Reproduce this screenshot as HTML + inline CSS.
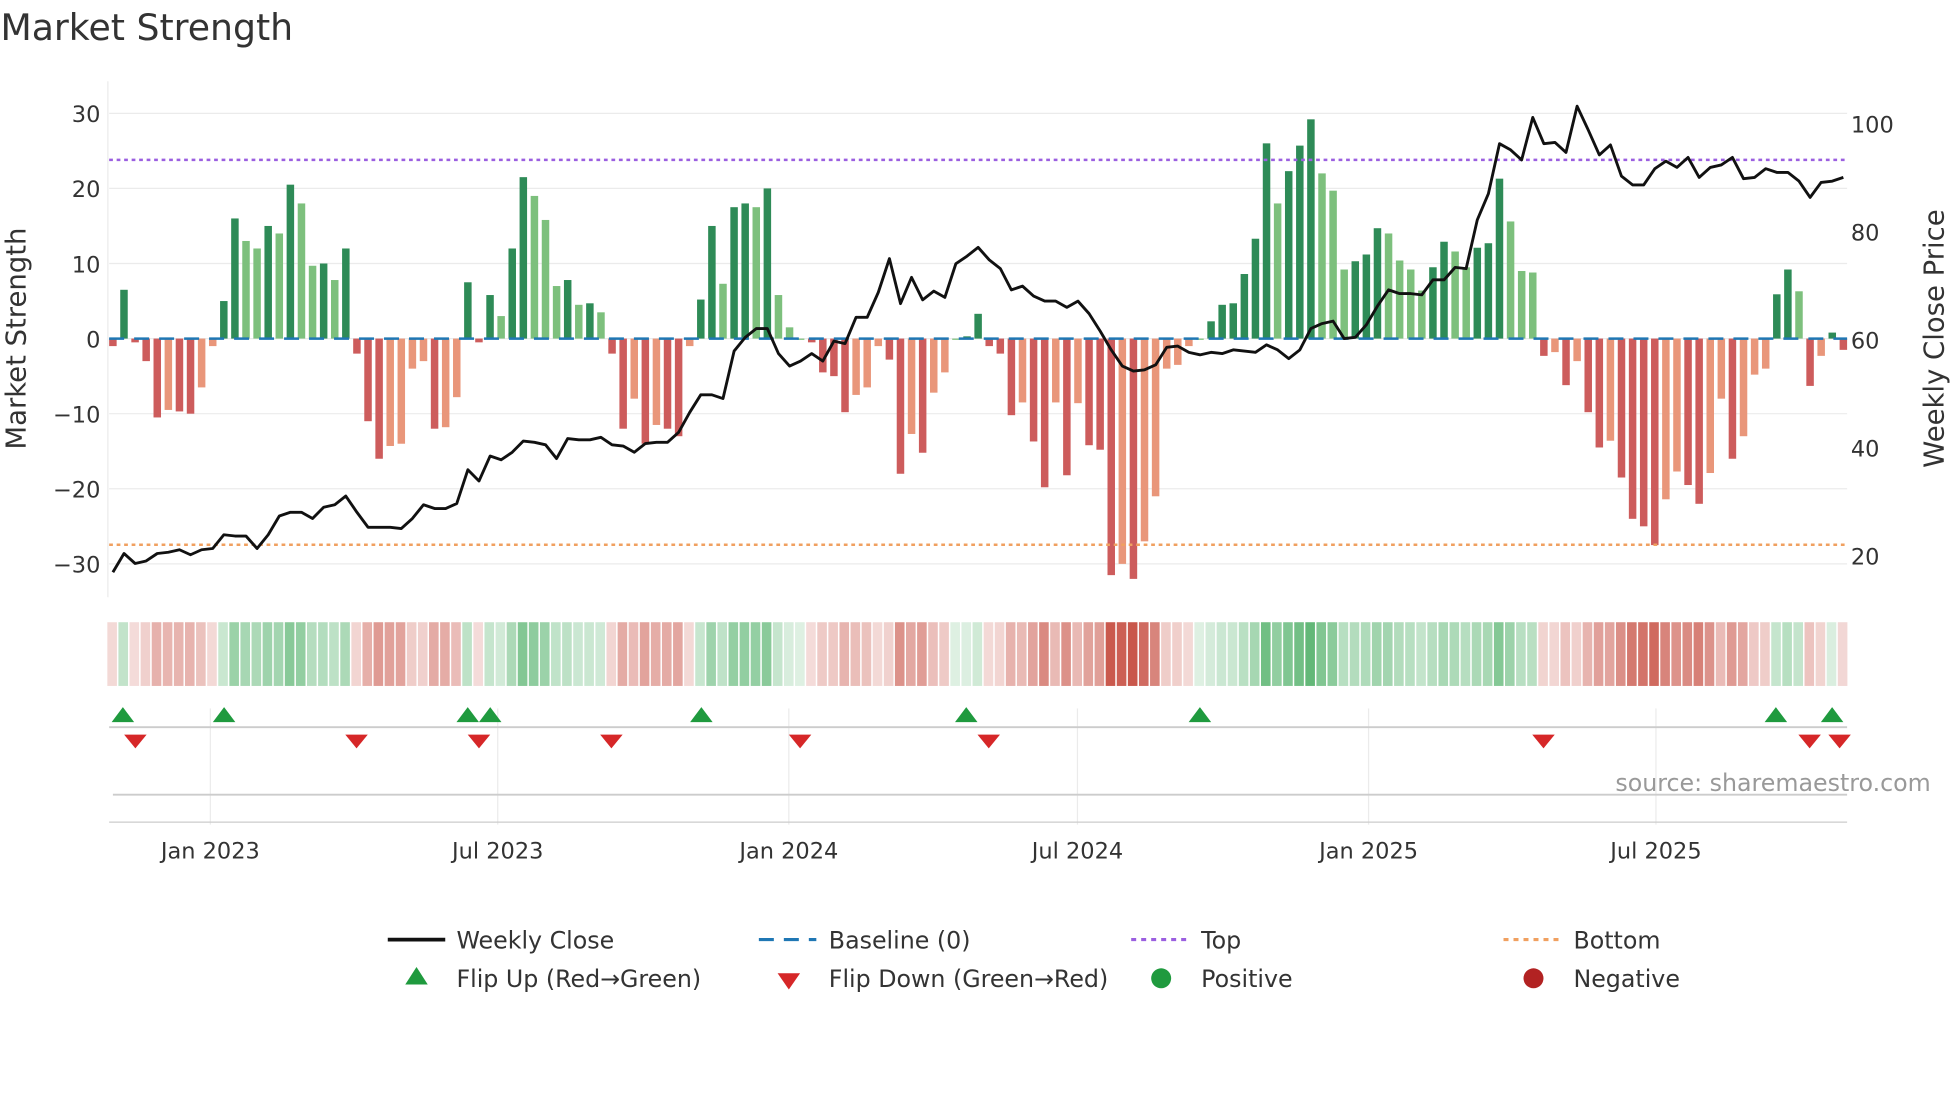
<!DOCTYPE html>
<html><head><meta charset="utf-8"><style>
html,body{margin:0;padding:0;background:#fff;}
svg{display:block;font-family:"DejaVu Sans","Liberation Sans",sans-serif;}
</style></head><body>
<svg id="s" width="1960" height="1102" viewBox="0 0 1568 882" xmlns="http://www.w3.org/2000/svg">
<rect width="1568" height="882" fill="#fff"/>
<text x="0" y="32" font-size="29" fill="#333">Market Strength</text>
<g id="grid" stroke="#ebebeb" stroke-width="1"></g>
<g id="bars"></g>
<g id="strip"></g>
<g id="lower"></g>
<g id="lines"></g>
<g id="labels" font-size="18" fill="#333"></g>
<text x="13" y="271" font-size="22" fill="#333" text-anchor="middle" transform="rotate(-90 13 271)" dy="7">Market Strength</text>
<text x="1548" y="271" font-size="22" fill="#333" text-anchor="middle" transform="rotate(-90 1548 271)" dy="7">Weekly Close Price</text>
<text x="1545" y="633" font-size="19" fill="#999" text-anchor="end">source: sharemaestro.com</text>
<g font-size="19" fill="#333">
<line x1="310" y1="752" x2="356" y2="752" stroke="#111" stroke-width="3"/><text x="365" y="759">Weekly Close</text>
<line x1="607" y1="752" x2="653" y2="752" stroke="#1f77b4" stroke-width="2.5" stroke-dasharray="12,8"/><text x="663" y="759">Baseline (0)</text>
<line x1="905" y1="752" x2="951" y2="752" stroke="#9b5fe0" stroke-width="2.5" stroke-dasharray="4,4"/><text x="961" y="759">Top</text>
<line x1="1203" y1="752" x2="1249" y2="752" stroke="#f0a060" stroke-width="2.5" stroke-dasharray="4,4"/><text x="1259" y="759">Bottom</text>
<polygon points="333,774 324,788 342,788" fill="#1f9a3e"/><text x="365" y="790">Flip Up (Red→Green)</text>
<polygon points="622,779 640,779 631,792" fill="#d62728"/><text x="663" y="790">Flip Down (Green→Red)</text>
<circle cx="929" cy="783" r="8" fill="#1f9a3e"/><text x="961" y="790">Positive</text>
<circle cx="1227" cy="783" r="8" fill="#b22222"/><text x="1259" y="790">Negative</text>
</g>
</svg>
<script>
const NS="http://www.w3.org/2000/svg";
function el(p,t,a){const e=document.createElementNS(NS,t);for(const k in a)e.setAttribute(k,a[k]);document.getElementById(p).appendChild(e);return e;}
const v=[-1,6.5,-0.5,-3,-10.5,-9.5,-9.7,-10,-6.5,-1,5,16,13,12,15,14,20.5,18,9.7,10,7.8,12,-2,-11,-16,-14.3,-14,-4,-3,-12,-11.8,-7.8,7.5,-0.5,5.8,3,12,21.5,19,15.8,7,7.8,4.5,4.7,3.5,-2,-12,-8,-14,-11.5,-12,-13,-1,5.2,15,7.3,17.5,18,17.5,20,5.8,1.5,0,-0.5,-4.5,-5,-9.8,-7.5,-6.5,-1,-2.8,-18,-12.7,-15.2,-7.2,-4.5,0,0.3,3.3,-1,-2,-10.2,-8.5,-13.7,-19.8,-8.5,-18.2,-8.6,-14.2,-14.8,-31.5,-30,-32,-27,-21,-4,-3.5,-1,0,2.3,4.5,4.7,8.6,13.3,26,18,22.3,25.7,29.2,22,19.7,9.2,10.3,11.2,14.7,14,10.4,9.2,6.4,9.5,12.9,11.6,9.5,12.1,12.7,21.3,15.6,9,8.8,-2.3,-1.8,-6.2,-3,-9.8,-14.5,-13.6,-18.5,-24,-25,-27.5,-21.4,-17.7,-19.5,-22,-17.9,-8,-16,-13,-4.8,-4,5.9,9.2,6.3,-6.3,-2.3,0.8,-1.5];
const n=v.length,x0=90,x1=1475,dx=(x1-x0)/(n-1);
const Y=u=>271-u*6.01;
[30,20,10,0,-10,-20,-30].forEach(u=>{el("grid","line",{x1:87,x2:1478,y1:Y(u),y2:Y(u)});el("labels","text",{x:80,y:Y(u)+7,"text-anchor":"end"}).textContent=(u<0?"−"+(-u):u);});
el("grid","line",{x1:86,x2:86,y1:65,y2:478});
[100,80,60,40,20].forEach(p=>{el("labels","text",{x:1481,y:272-(p-60)*4.325+7}).textContent=p;});
v.forEach((u,i)=>{const x=x0+i*dx;const pr=i?v[i-1]:0;const dark=Math.abs(u)>=Math.abs(pr)||(u*pr<0);
let c=u>=0?(dark?"#2e8b57":"#7dc07d"):(dark?"#cd5c5c":"#e9967a");
const y=Math.min(Y(u),271),h=Math.max(Math.abs(u)*6.01,1);
el("bars","rect",{x:x-3,y:y,width:6,height:h,fill:c});
const a=0.2+0.8*Math.min(Math.abs(u)/32,1);
el("strip","rect",{x:x-4.45,y:498,width:dx-1.2,height:51,fill:u>=0?"#3aa655":"#c0392b","fill-opacity":a*0.85});
});
[168,398,631,862,1095,1325].forEach((x,i)=>{el("lower","line",{x1:x,x2:x,y1:567,y2:660,stroke:"#ebebeb"});
el("labels","text",{x:x,y:687,"text-anchor":"middle"}).textContent=["Jan 2023","Jul 2023","Jan 2024","Jul 2024","Jan 2025","Jul 2025"][i];});
el("lower","line",{x1:87,x2:1478,y1:582,y2:582,stroke:"#ccc","stroke-width":1.5});
el("lower","line",{x1:90,x2:1478,y1:636,y2:636,stroke:"#ccc","stroke-width":1.5});
el("lower","line",{x1:87,x2:1478,y1:658,y2:658,stroke:"#ccc","stroke-width":1});
[98,179,374,392,561,773,960,1421,1466].forEach(x=>el("lower","polygon",{points:`${x},566 ${x-9},578 ${x+9},578`,fill:"#1f9a3e"}));
[108,285,383,489,640,791,1235,1448,1472].forEach(x=>el("lower","polygon",{points:`${x-9},588 ${x+9},588 ${x},599`,fill:"#d62728"}));
el("lines","line",{x1:87,x2:1478,y1:128,y2:128,stroke:"#9b5fe0","stroke-width":2,"stroke-dasharray":"3,3"});
el("lines","line",{x1:87,x2:1478,y1:436,y2:436,stroke:"#f0a060","stroke-width":2,"stroke-dasharray":"3,3"});
el("lines","line",{x1:87,x2:1478,y1:271,y2:271,stroke:"#1f77b4","stroke-width":2,"stroke-dasharray":"12,8"});
const py=[458,443,451,449,443,442,440,444,440,439,428,429,429,439,428,413,410,410,415,406,404,397,410,422,422,422,423,415,404,407,407,403,376,385,365,368,362,353,354,356,367,351,352,352,350,356,357,362,355,354,354,346,330,316,316,319,281,270,263,263,283,293,289,283,289,273,275,254,254,234,207,243,222,240,233,238,211,205,198,208,215,232,229,237,241,241,246,241,251,265,280,293,297,296,292,278,277,282,284,282,283,280,281,282,276,280,287,280,263,259,257,271,270,260,245,232,235,235,236,224,224,214,215,176,155,115,120,128,94,115,114,122,85,104,124,116,141,148,148,135,129,134,126,142,134,132,126,143,142,135,138,138,145,158,146,145,142];
const m=py.length,pdx=(x1-x0)/(m-1);
el("lines","polyline",{points:py.map((y,i)=>(x0+i*pdx).toFixed(1)+","+y).join(" "),fill:"none",stroke:"#111","stroke-width":2.3,"stroke-linejoin":"round"});
</script>
</body></html>
